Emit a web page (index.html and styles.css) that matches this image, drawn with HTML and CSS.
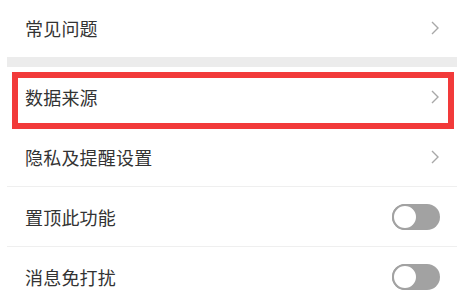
FILE: index.html
```html
<!DOCTYPE html>
<html>
<head>
  <meta charset="UTF-8">
  <meta name="viewport" content="width=device-width, initial-scale=1.0">
  <title>设置</title>
  <link rel="stylesheet" href="styles.css">
</head>
<body>
  <div class="settings">
    <div class="row">
      <span class="label">常见问题</span>
      <svg class="chevron" width="8" height="14" viewBox="0 0 8 14"><polyline points="1,1 7,7 1,13" fill="none" stroke="#a8a8a8" stroke-width="1.4"/></svg>
    </div>

    <div class="band"></div>

    <div class="row highlighted">
      <span class="label">数据来源</span>
      <svg class="chevron" width="8" height="14" viewBox="0 0 8 14"><polyline points="1,1 7,7 1,13" fill="none" stroke="#a8a8a8" stroke-width="1.4"/></svg>
      <div class="mark"></div>
    </div>

    <div class="row divided">
      <span class="label">隐私及提醒设置</span>
      <svg class="chevron" width="8" height="14" viewBox="0 0 8 14"><polyline points="1,1 7,7 1,13" fill="none" stroke="#a8a8a8" stroke-width="1.4"/></svg>
    </div>

    <div class="row divided">
      <span class="label">置顶此功能</span>
      <div class="switch"><div class="knob"></div></div>
    </div>

    <div class="row divided">
      <span class="label">消息免打扰</span>
      <div class="switch"><div class="knob"></div></div>
    </div>
  </div>
</body>
</html>
```

FILE: styles.css
```css
body {
  margin: 0;
  background: #fff;
  font-family: "Noto Sans CJK SC", "Noto Sans", sans-serif;
}
.settings {
  margin-left: 7px;
  width: 450px;
}
.row {
  position: relative;
  display: flex;
  align-items: center;
  justify-content: space-between;
  height: 60px;
  padding: 0 17px 0 18px;
  box-sizing: border-box;
}
.row:first-child {
  height: 57px;
  padding-bottom: 2px;
}
.divided {
  border-bottom: 1px solid #efefef;
}
.label {
  font-size: 18px;
  color: #333;
  letter-spacing: 0.2px;
}
.chevron {
  display: block;
  margin-right: 1px;
}
.band {
  height: 10px;
  background: #ececec;
}
.mark {
  position: absolute;
  top: 5px;
  left: 5px;
  right: 3px;
  bottom: -2px;
  border: 6px solid #f23a3a;
}
.switch {
  position: relative;
  width: 48px;
  height: 26px;
  border-radius: 13px;
  background: #a2a2a2;
}
.knob {
  position: absolute;
  top: 0;
  left: 0;
  width: 22px;
  height: 22px;
  border-radius: 50%;
  background: #fff;
  border: 2px solid #a2a2a2;
}
```
